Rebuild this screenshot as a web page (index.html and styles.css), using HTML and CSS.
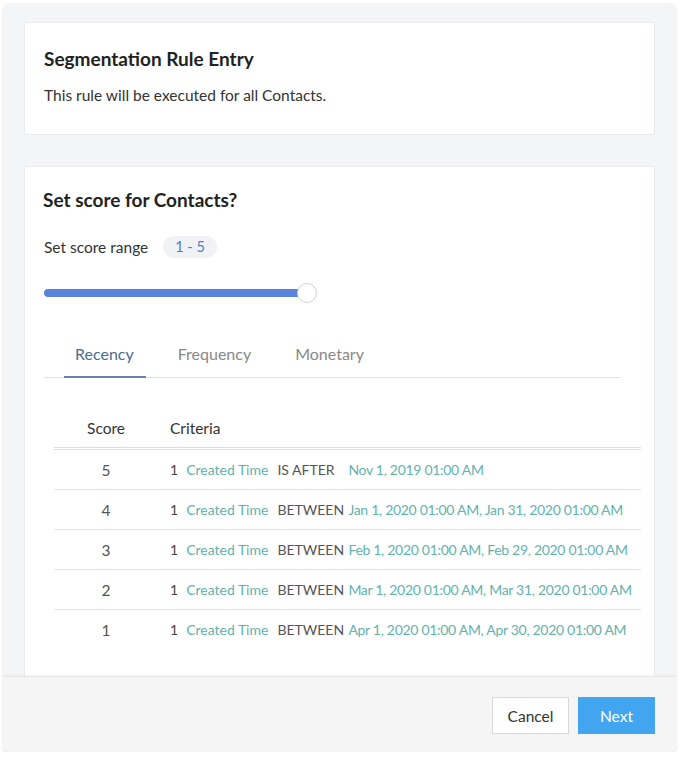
FILE: index.html
```html
<!DOCTYPE html>
<html lang="en">
<head>
    <meta charset="UTF-8">
    <meta name="viewport" content="width=device-width, initial-scale=1.0">
    <title>Segmentation Rule Entry</title>
    <link rel="stylesheet" href="styles.css">
</head>
<body>
    <div class="panel">
        <div class="panel-body">
            <div class="card intro">
                <h2>Segmentation Rule Entry</h2>
                <p>This rule will be executed for all Contacts.</p>
            </div>

            <div class="card score-card">
                <h2>Set score for Contacts?</h2>
                <div class="range-row">
                    <span>Set score range</span>
                    <span class="pill">1 - 5</span>
                </div>
                <div class="slider">
                    <div class="slider-track"></div>
                    <div class="slider-thumb"></div>
                </div>

                <div class="tabs">
                    <div class="tab active">Recency</div>
                    <div class="tab">Frequency</div>
                    <div class="tab">Monetary</div>
                </div>

                <table class="score-table">
                    <thead>
                        <tr>
                            <th class="col-score">Score</th>
                            <th>Criteria</th>
                        </tr>
                    </thead>
                    <tbody>
                        <tr>
                            <td class="col-score">5</td>
                            <td><span class="num">1</span><span class="field">Created Time</span><span class="op">IS AFTER</span><span class="val">Nov 1, 2019 01:00 AM</span></td>
                        </tr>
                        <tr>
                            <td class="col-score">4</td>
                            <td><span class="num">1</span><span class="field">Created Time</span><span class="op">BETWEEN</span><span class="val">Jan 1, 2020 01:00 AM, Jan 31, 2020 01:00 AM</span></td>
                        </tr>
                        <tr>
                            <td class="col-score">3</td>
                            <td><span class="num">1</span><span class="field">Created Time</span><span class="op">BETWEEN</span><span class="val">Feb 1, 2020 01:00 AM, Feb 29, 2020 01:00 AM</span></td>
                        </tr>
                        <tr>
                            <td class="col-score">2</td>
                            <td><span class="num">1</span><span class="field">Created Time</span><span class="op">BETWEEN</span><span class="val">Mar 1, 2020 01:00 AM, Mar 31, 2020 01:00 AM</span></td>
                        </tr>
                        <tr>
                            <td class="col-score">1</td>
                            <td><span class="num">1</span><span class="field">Created Time</span><span class="op">BETWEEN</span><span class="val">Apr 1, 2020 01:00 AM, Apr 30, 2020 01:00 AM</span></td>
                        </tr>
                    </tbody>
                </table>
            </div>
        </div>

        <div class="panel-footer">
            <button type="button" class="btn">Cancel</button>
            <button type="button" class="btn btn-primary">Next</button>
        </div>
    </div>
</body>
</html>
```

FILE: styles.css
```css
body {
    margin: 0;
    padding: 0;
    background-color: #ffffff;
    font-family: Lato, "Open Sans", sans-serif;
    color: #333333;
}
.panel {
    margin: 3px 0 0 3px;
    width: 673px;
    height: 749px;
    background: #f4f5f7;
    border-radius: 6px;
    box-shadow: 0 2px 3px rgba(0, 0, 0, 0.12);
    display: flex;
    flex-direction: column;
    overflow: hidden;
}
.panel-body {
    flex: 1;
    overflow: hidden;
    padding: 19px 21px 0 21px;
}
.card {
    background: #ffffff;
    border: 1px solid #e9ebee;
}
.card h2 {
    margin: 0;
    font-size: 19px;
    font-weight: 700;
    line-height: 24px;
    color: #222222;
}
.intro {
    padding: 24px 19px 0 19px;
    box-sizing: border-box;
    height: 113px;
}
.intro p {
    margin: 13px 0 0;
    font-size: 15.5px;
    line-height: 22px;
    color: #333333;
}
.score-card {
    margin-top: 31px;
    padding: 21px 33px 40px 19px;
}
.score-card h2 {
    margin-left: -1px;
}
.range-row {
    margin-top: 24px;
    display: flex;
    align-items: center;
    gap: 15px;
    font-size: 15.5px;
}
.pill {
    background: #f0f2f6;
    color: #4e7fc2;
    border-radius: 11px;
    padding: 0 12px;
    line-height: 22px;
    font-size: 14.5px;
}
.slider {
    margin-top: 25px;
    width: 274px;
    height: 20px;
    position: relative;
}
.slider-track {
    position: absolute;
    left: 0;
    top: 6px;
    width: 264px;
    height: 8px;
    border-radius: 4px;
    background: #5b83dc;
}
.slider-thumb {
    position: absolute;
    left: 253px;
    top: 0;
    width: 18px;
    height: 18px;
    border-radius: 50%;
    background: #ffffff;
    border: 1px solid #cfd3d8;
}
.tabs {
    margin-top: 28px;
    display: flex;
    gap: 21px;
    padding-left: 20px;
    border-bottom: 1px solid #dfe2e6;
}
.tab {
    font-size: 16px;
    line-height: 20px;
    padding: 13px 12px 12px 11px;
    color: #888888;
    border-bottom: 2px solid transparent;
    margin-bottom: -1px;
}
.tab.active {
    color: #4c6b93;
    border-bottom-color: #6882a3;
}
.score-table {
    margin: 30px 0 0 10px;
    width: 587px;
    border-collapse: collapse;
    font-size: 14px;
}
.score-table th {
    font-weight: 400;
    font-size: 15.5px;
    text-align: left;
    color: #333333;
    height: 39px;
    padding: 0 0 0 12px;
    border-bottom: 3px double #dddddd;
}
.score-table td {
    height: 39px;
    padding: 0 0 0 12px;
    border-bottom: 1px solid #e2e2e2;
    color: #555555;
    white-space: nowrap;
}
.score-table tr:last-child td {
    border-bottom: none;
}
.score-table .col-score {
    width: 104px;
    padding: 0;
    text-align: center;
    font-size: 15.5px;
}
.num {
    color: #444444;
    margin-right: 8px;
}
.field {
    color: #62b3ae;
    margin-right: 9px;
}
.op {
    display: inline-block;
    min-width: 71px;
    color: #555555;
}
.val {
    color: #62b3ae;
    letter-spacing: -0.3px;
}
.panel-footer {
    height: 76px;
    flex-shrink: 0;
    box-sizing: border-box;
    background: #f5f5f5;
    border-top: 1px solid #e6e6e6;
    box-shadow: 0 -1px 3px rgba(0, 0, 0, 0.04);
    display: flex;
    justify-content: flex-end;
    align-items: flex-start;
    gap: 9px;
    padding: 20px 21px 0 0;
}
.btn {
    width: 77px;
    height: 37px;
    font-family: Lato, "Open Sans", sans-serif;
    font-size: 15.5px;
    border: 1px solid #d9d9d9;
    background: #ffffff;
    color: #333333;
    cursor: pointer;
}
.btn-primary {
    background: #42a5f0;
    border-color: #42a5f0;
    color: #ffffff;
}
```
